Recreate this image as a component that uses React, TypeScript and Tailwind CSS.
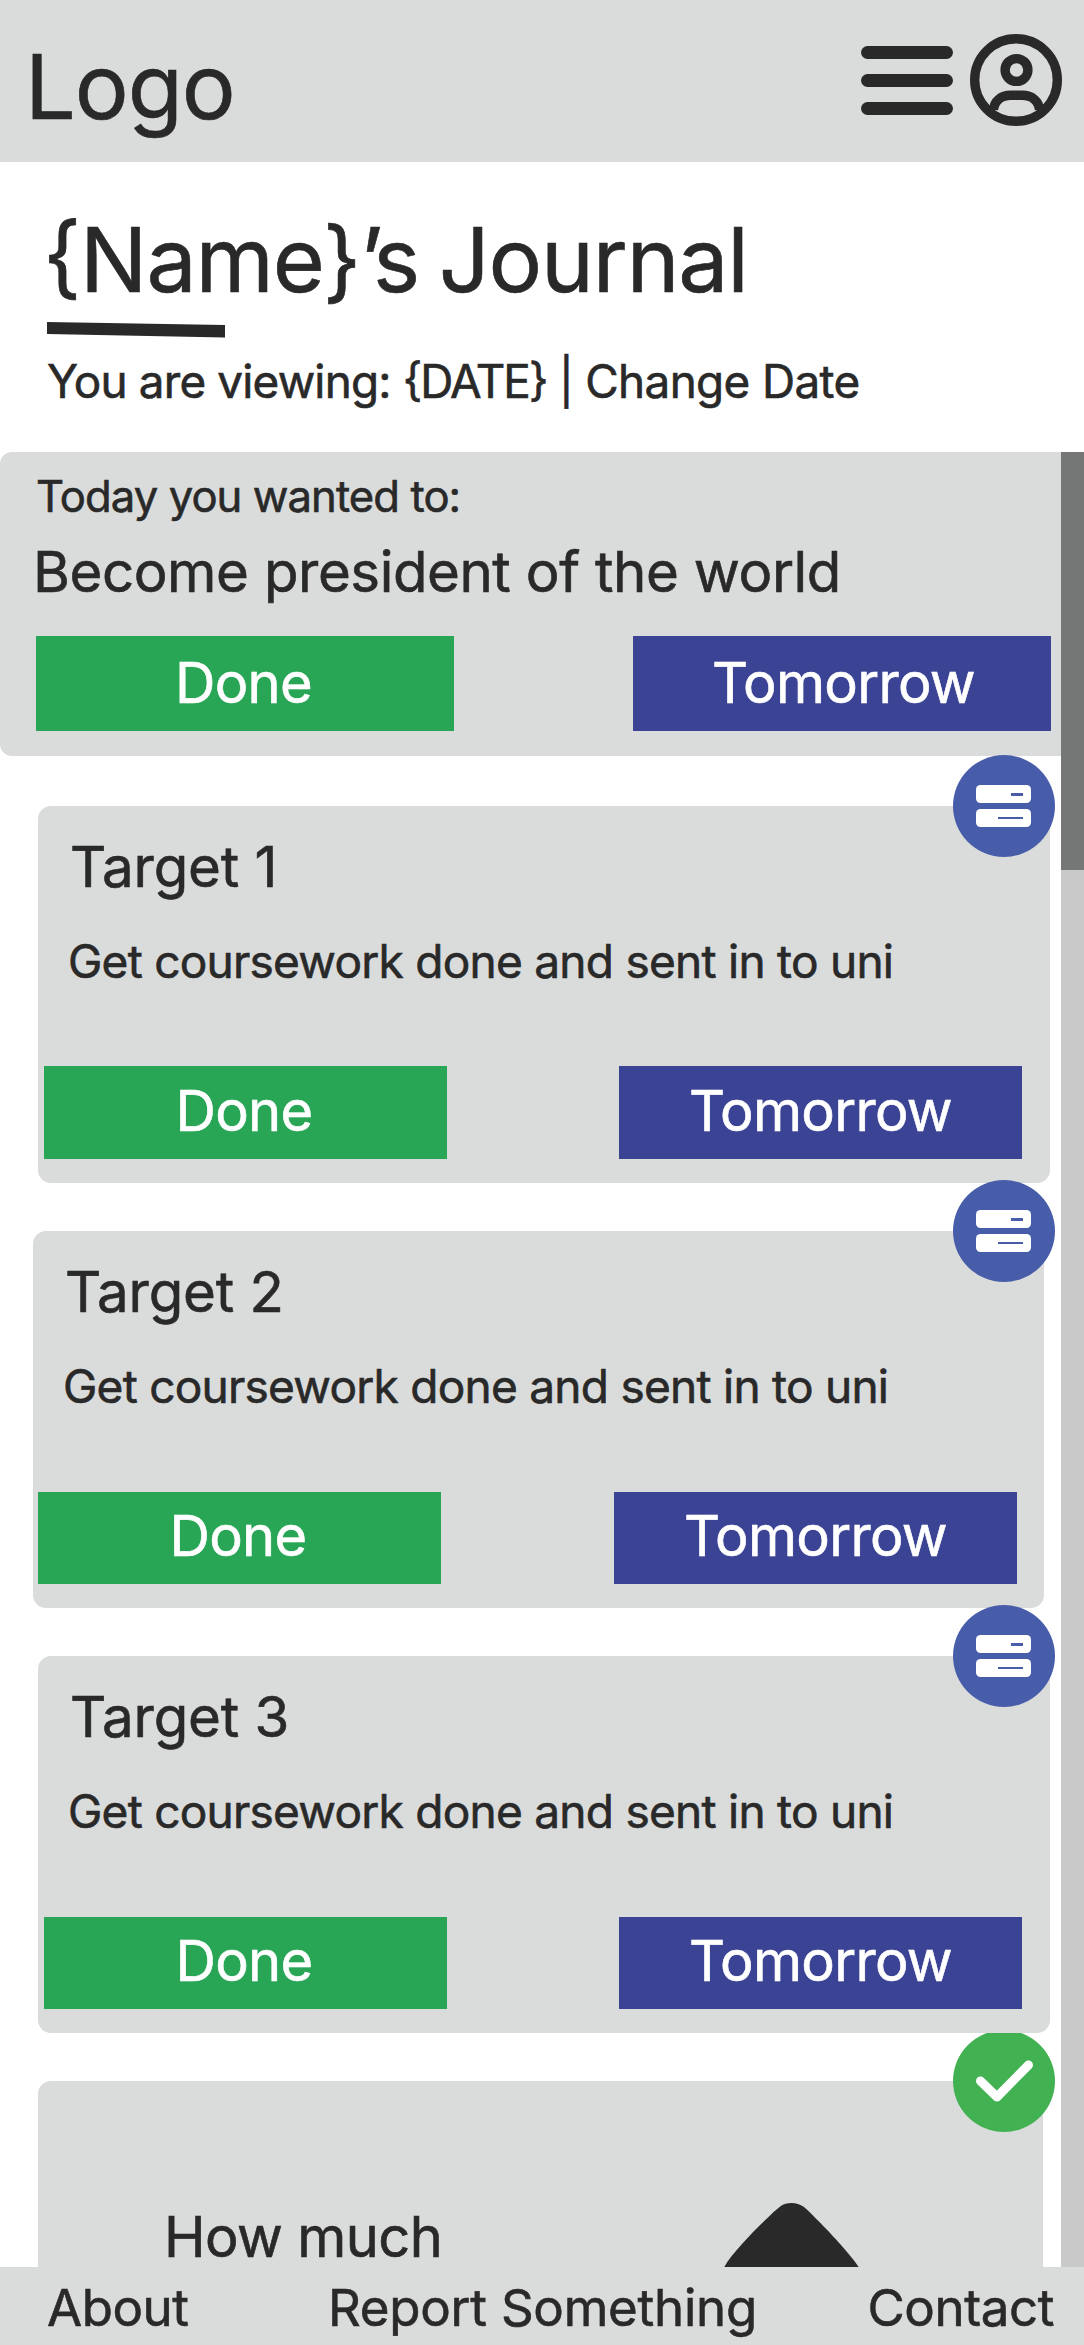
import React from "react";

type Target = {
  title: string;
  card: string;
  buttons: string;
};

const targets: Target[] = [
  { title: "Target 1", card: "ml-[38px] mr-[11px] h-[377px] mt-[50px]", buttons: "pl-[6px] pr-[28px] h-[93px] mt-[77px]" },
  { title: "Target 2", card: "ml-[33px] mr-[17px] h-[377px] mt-[48px]", buttons: "pl-[5px] pr-[27px] h-[92px] mt-[78px]" },
  { title: "Target 3", card: "ml-[38px] mr-[11px] h-[377px] mt-[48px]", buttons: "pl-[6px] pr-[28px] h-[92px] mt-[78px]" },
];

function MenuIcon() {
  return (
    <svg className="mt-[46px] h-[69px] w-[92px]" viewBox="0 0 92 69" fill="#292929">
      <rect y="0" width="92" height="13" rx="6.5" />
      <rect y="28" width="92" height="13" rx="6.5" />
      <rect y="56" width="92" height="13" rx="6.5" />
    </svg>
  );
}

function ProfileIcon() {
  return (
    <svg className="mt-[34px] ml-[17px] h-[92px] w-[92px]" viewBox="0 0 92 92" fill="none" stroke="#292929" strokeWidth="9.4">
      <circle cx="46" cy="46" r="41.3" />
      <circle cx="46.5" cy="36" r="11.4" />
      <path d="M23.5 76 C24 67 31 61.3 41 61.3 H52 C62 61.3 69 67 69.5 76" />
    </svg>
  );
}

function TargetBadge() {
  return (
    <svg className="absolute top-[-51px] left-[953px] h-[102px] w-[102px]" viewBox="0 0 102 102">
      <circle cx="51" cy="51" r="51" fill="#475da9" />
      <rect x="23" y="30" width="55" height="18" rx="4.5" fill="#fff" />
      <rect x="23" y="54" width="55" height="18" rx="4.5" fill="#fff" />
      <rect x="58" y="38" width="12" height="3" fill="#475da9" />
      <rect x="45" y="62" width="25" height="2" fill="#475da9" />
    </svg>
  );
}

function DoneBadge() {
  return (
    <svg className="absolute top-[-48px] left-[953px] h-[99px] w-[102px]" viewBox="0 3 102 99">
      <circle cx="51" cy="51" r="51" fill="#42b152" />
      <path d="M27.5 51 L44 67 L75.5 35" fill="none" stroke="#fff" strokeWidth="9" strokeLinecap="round" strokeLinejoin="round" />
    </svg>
  );
}

function Actions({ className, button, last }: { className: string; button: string; last: string }) {
  return (
    <div className={`flex justify-between text-[56px] text-white ${className}`}>
      <button className={`bg-[#28a555] pr-[3px] tracking-[-0.7px] ${button}`}>Done</button>
      <button className={`bg-[#3b4394] tracking-[-0.7px] ${last} ${button}`}>Tomorrow</button>
    </div>
  );
}

function TargetCard({ title, card, buttons }: Target) {
  return (
    <div className="relative">
      <section className={`rounded-[13px] bg-[#dadcdb] pt-[27px] ${card}`}>
        <h2 className="pl-[32px] text-[56.4px] leading-[68px] tracking-[-0.2px]">{title}</h2>
        <p className="mt-[32px] pl-[30px] text-[46px] leading-[56px] tracking-[-0.74px] whitespace-nowrap">
          Get coursework done and sent in to uni
        </p>
        <Actions className={buttons} button="w-[403px] pb-[4px] leading-[88px]" last="" />
      </section>
      <TargetBadge />
    </div>
  );
}

export default function App() {
  return (
    <div className="flex h-[2345px] w-[1084px] flex-col bg-white font-['Inter',sans-serif] text-[#292929] [-webkit-text-stroke:0.6px]">
      <header className="flex h-[162px] shrink-0 bg-[#dadcdb] pr-[22px] pl-[25px]">
        <h1 className="mt-[37px] mr-auto text-[90px] leading-[100px] tracking-[-1.1px]">Logo</h1>
        <MenuIcon />
        <ProfileIcon />
      </header>

      <div className="h-[290px] shrink-0 pt-[48px] pl-[47px] whitespace-nowrap">
        <h2 className="ml-[-4px] text-[89.5px] leading-[100px] tracking-[-1.6px] [font-feature-settings:'calt'_1]">
          <span className="tracking-[-1.1px]">{"{Name}"}</span>
          <span className="tracking-[-3.4px]">{"’s "}</span>
          <span className="tracking-[-1.2px]">Journal</span>
        </h2>
        <svg className="mt-[12px] h-[16px] w-[178px]" viewBox="0 0 178 16" fill="#292929">
          <path d="M0 0 L178 3 V15.5 L0 12 Z" />
        </svg>
        <p className="mt-[16px] text-[45.8px] leading-[56px] tracking-[-0.8px] [font-feature-settings:'calt'_1]">
          {"You are viewing: "}
          <span className="tracking-[-1.9px]">{"{DATE}"}</span>
          {" | "}
          <span className="tracking-[-0.6px]">Change Date</span>
        </p>
      </div>

      <main className="flex h-[1815px] shrink-0">
        <div className="h-full w-[1061px]">
          <section className="h-[304px] rounded-l-[12px] bg-[#dadcdb] pt-[17px]">
            <p className="pl-[36px] text-[43.6px] leading-[56px] tracking-[-0.92px]">Today you wanted to:</p>
            <p className="mt-[13px] pl-[33px] text-[56.4px] leading-[68px] tracking-[-0.43px]">
              Become president of the world
            </p>
            <Actions
              className="mt-[30px] h-[95px] pr-[10px] pl-[36px]"
              button="w-[418px] leading-[95px]"
              last="pl-[3px]"
            />
          </section>

          {targets.map((t) => (
            <TargetCard key={t.title} {...t} />
          ))}

          <div className="relative mt-[48px]">
            <section className="mr-[18px] ml-[38px] flex h-[186px] rounded-t-[13px] bg-[#dadcdb]">
              <p className="mt-[126px] ml-[126px] h-[60px] w-[560px] text-[56px] leading-[60px] tracking-[-0.6px]">
                How much
              </p>
              <svg className="mt-[122px] h-[64px] w-[136px]" viewBox="0 0 136 64" fill="#292929">
                <path d="M0 64.5 C4 57 10 50 18 41 C27 31 36 22 44.5 14 Q49 9 56.5 3.2 Q61 0 67.6 0 Q74 0 80 4 C86 9 90 14 96 19.5 C106 30 110 34 117 42 C124 50 130 57 135 64.5 Z" />
              </svg>
            </section>
            <DoneBadge />
          </div>
        </div>
        <div className="h-full w-[23px] bg-[#c9c9c9]">
          <div className="h-[418px] bg-[#757776]" />
        </div>
      </main>

      <footer className="flex h-[78px] shrink-0 bg-[#dadcdb] pt-[2px] pr-[30px] pl-[47px] text-[51px] leading-[78px] whitespace-nowrap">
        <a className="h-[76px] w-[281px] tracking-[-0.5px]">About</a>
        <a className="mr-auto h-[76px] tracking-[-0.25px]">Report Something</a>
        <a className="h-[76px] tracking-[-0.4px]">Contact</a>
      </footer>
    </div>
  );
}
